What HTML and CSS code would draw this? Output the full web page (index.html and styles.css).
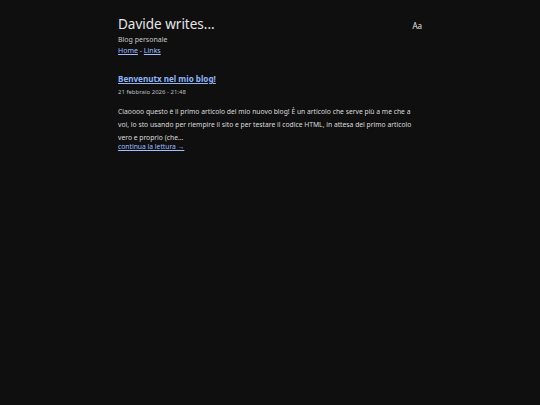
FILE: index.html
```html
<!DOCTYPE html>
<html lang="it">
<head>
<meta charset="utf-8">
<title>Davide writes...</title>
<link rel="stylesheet" href="styles.css">
</head>
<body>
<div class="page">
  <header class="site-header">
    <div class="brand">
      <h1 class="site-title">Davide writes...</h1>
      <p class="tagline">Blog personale</p>
      <nav class="nav"><a href="#">Home</a> - <a href="#">Links</a></nav>
    </div>
    <button class="font-toggle" type="button">Aa</button>
  </header>
  <main>
    <article class="post">
      <h2 class="post-title"><a href="#">Benvenutx nel mio blog!</a></h2>
      <p class="post-date">21 febbraio 2026 - 21:48</p>
      <p class="post-excerpt">Ciaoooo questo è il primo articolo del mio nuovo blog! È un articolo che serve più a me che a voi, lo sto usando per riempire il sito e per testare il codice HTML, in attesa del primo articolo vero e proprio (che...</p>
      <p class="read-more-row"><a class="read-more" href="#">continua la lettura →</a></p>
    </article>
  </main>
</div>
</body>
</html>
```
FILE: styles.css
```css
html, body {
  margin: 0;
  padding: 0;
  background: #0f0f0f;
  color: #dcdcdc;
  font-family: "Noto Sans", "Open Sans", sans-serif;
}
.page {
  width: 304px;
  margin: 0 auto;
  padding-top: 14px;
}
.site-header {
  display: flex;
  justify-content: space-between;
  align-items: flex-start;
}
.site-title {
  margin: 0;
  font-size: 13.5px;
  font-weight: 400;
  line-height: 20px;
  color: #e6e6e6;
}
.tagline {
  margin: 0;
  font-size: 7px;
  line-height: 11px;
  color: #c8c8c8;
}
.nav {
  font-size: 7px;
  line-height: 11px;
  color: #c8c8c8;
}
a {
  color: #9fbfff;
}
.font-toggle {
  margin-top: 6px;
  background: none;
  border: 0;
  padding: 0;
  color: #e6e6e6;
  font-family: inherit;
  font-size: 8px;
  line-height: 12px;
}
.post {
  margin-top: 16px;
}
.post-title {
  margin: 0;
  font-size: 8.1px;
  line-height: 14px;
  font-weight: 700;
}
.post-title a {
  color: #8fb4f5;
}
.post-date {
  margin: 0;
  font-size: 6px;
  line-height: 12px;
  color: #bdbdbd;
}
.post-excerpt {
  margin: 6.5px 0 0;
  font-size: 6.75px;
  line-height: 13px;
  color: #dcdcdc;
}
.read-more-row {
  margin: -3.5px 0 0;
  font-size: 6.75px;
  line-height: 13px;
}
```
